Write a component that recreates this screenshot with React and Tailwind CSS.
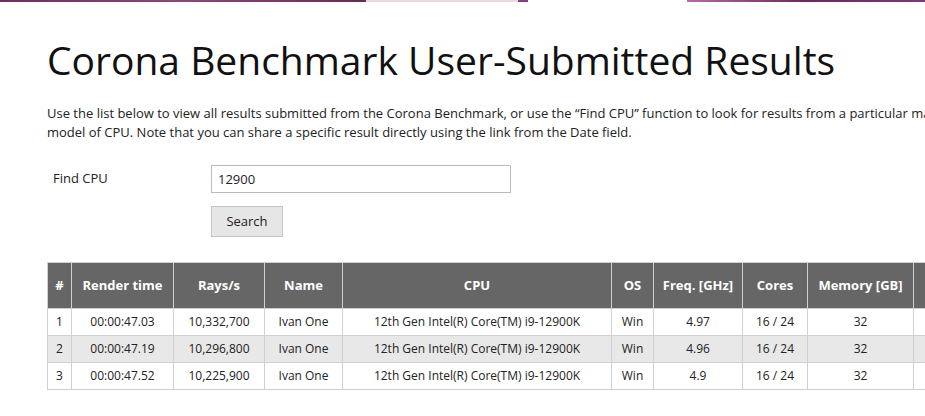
const rows = [
  { n: 1, time: "00:00:47.03", rays: "10,332,700", freq: "4.97" },
  { n: 2, time: "00:00:47.19", rays: "10,296,800", freq: "4.96" },
  { n: 3, time: "00:00:47.52", rays: "10,225,900", freq: "4.9" },
];

const cols = [
  { label: "#", w: "w-[24px]" },
  { label: "Render time", w: "w-[102px]" },
  { label: "Rays/s", w: "w-[91px]" },
  { label: "Name", w: "w-[78px]" },
  { label: "CPU", w: "w-[269px]" },
  { label: "OS", w: "w-[42px]" },
  { label: "Freq. [GHz]", w: "w-[89px]" },
  { label: "Cores", w: "w-[65px]" },
  { label: "Memory [GB]", w: "w-[106px]" },
  { label: "Date", w: "w-[140px]" },
];

function App() {
  return (
    <div className="w-[925px] h-[416px] overflow-hidden bg-white font-['Open_Sans',sans-serif] text-[#222]">
      {/* header image edge */}
      <div className="flex h-[2px] w-full">
        <div className="w-[366px] bg-gradient-to-r from-[#6e2f5e] via-[#8a4a78] to-[#6a2a58]" />
        <div className="w-[152px] bg-[#e9d9e5]" />
        <div className="w-[10px] bg-[#8b3f7c]" />
        <div className="w-[159px] bg-white" />
        <div className="flex-1 bg-gradient-to-r from-[#b869a8] via-[#6a2a5a] to-[#7a3a78]" />
      </div>

      <div className="w-[1100px] pl-[47px]">
        <h1 className="mt-[33px] text-[39px] leading-[50px] text-[#111]">
          Corona Benchmark User-Submitted Results
        </h1>

        <p className="mt-[19px] text-[13px] leading-[19px]">
          Use the list below to view all results submitted from the Corona Benchmark, or use the “Find CPU” function to look for results from a particular make and
          <br />
          model of CPU. Note that you can share a specific result directly using the link from the Date field.
        </p>

        <div className="mt-[23px] flex items-center">
          <label className="w-[164px] pl-[6px] text-[13px]">Find CPU</label>
          <input
            className="w-[300px] h-[28px] border border-[#bbb] px-[6px] text-[13px] text-[#222] outline-none"
            defaultValue="12900"
          />
        </div>
        <div className="mt-[13px] pl-[164px]">
          <button className="w-[72px] h-[31px] border border-[#c4c4c4] bg-[#e6e6e6] text-[13px] text-[#222]">
            Search
          </button>
        </div>

        <table className="mt-[25px] w-[1006px] table-fixed border-collapse text-[12px]">
          <thead>
            <tr>
              {cols.map((c) => (
                <th
                  key={c.label}
                  className={`${c.w} h-[46px] border border-[#d0d0d0] bg-[#666] text-center text-[13px] font-bold text-white`}
                >
                  {c.label}
                </th>
              ))}
            </tr>
          </thead>
          <tbody>
            {rows.map((r, i) => (
              <tr key={r.n} className={i === 1 ? "bg-[#e8e8e8]" : "bg-white"}>
                <td className="h-[27px] border border-[#d0d0d0] pl-[8px] text-left">{r.n}</td>
                <td className="border border-[#d0d0d0] text-center">{r.time}</td>
                <td className="border border-[#d0d0d0] text-center">{r.rays}</td>
                <td className="border border-[#d0d0d0] text-center">Ivan One</td>
                <td className="border border-[#d0d0d0] text-center">12th Gen Intel(R) Core(TM) i9-12900K</td>
                <td className="border border-[#d0d0d0] text-center">Win</td>
                <td className="border border-[#d0d0d0] text-center">{r.freq}</td>
                <td className="border border-[#d0d0d0] text-center">16 / 24</td>
                <td className="border border-[#d0d0d0] text-center">32</td>
                <td className="border border-[#d0d0d0] text-center">2022-03-01</td>
              </tr>
            ))}
          </tbody>
        </table>
      </div>
    </div>
  );
}

export default App;
